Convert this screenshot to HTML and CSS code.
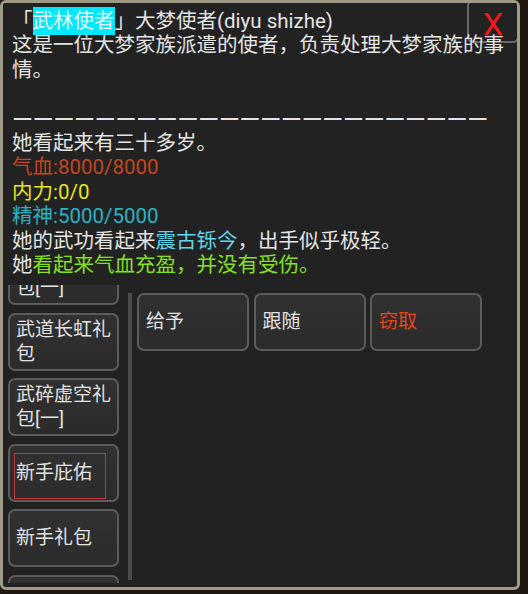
FILE: index.html
```html
<!DOCTYPE html>
<html lang="zh-CN">
<head>
<meta charset="utf-8">
<title>大梦使者</title>
<link rel="stylesheet" href="styles.css">
</head>
<body>
<div class="frame">
  <div class="base">
    <div class="list">
      <div class="list-inner">
        <div class="item">武动乾坤礼包[一]</div>
        <div class="item">武道长虹礼包</div>
        <div class="item">武碎虚空礼包[一]</div>
        <div class="item focus"><span class="ring"></span>新手庇佑</div>
        <div class="item">新手礼包</div>
        <div class="item">新手礼包</div>
      </div>
    </div>
    <div class="sep"></div>
    <div class="actions">
      <div class="act">给予</div>
      <div class="act">跟随</div>
      <div class="act steal">窃取</div>
    </div>
  </div>
  <div class="info">
    <div class="close">X</div>
    <div class="line">「<span class="hl">武林使者</span>」大梦使者(diyu shizhe)</div>
    <div class="line">这是一位大梦家族派遣的使者，负责处理大梦家族的事情。</div>
    <div class="blank"></div>
    <div class="line dash">———————————————————————</div>
    <div class="line">她看起来有三十多岁。</div>
    <div class="line hp">气血:8000/8000</div>
    <div class="line mp">内力:0/0</div>
    <div class="line sp">精神:5000/5000</div>
    <div class="line">她的武功看起来<span class="lvl">震古铄今</span>，出手似乎极轻。</div>
    <div class="line">她<span class="ok">看起来气血充盈，并没有受伤。</span></div>
  </div>
</div>
</body>
</html>
```
FILE: styles.css
```css
* { box-sizing: border-box; }
html, body {
  margin: 0;
  padding: 0;
  background: #1f1710;
  font-family: Roboto, "Noto Sans CJK SC", sans-serif;
  color: #e4e4e4;
}
.frame {
  position: relative;
  width: 520px;
  height: 590px;
  border: 3px solid #9d9a86;
  border-radius: 6px;
  background: #222222;
  overflow: hidden;
}
.base {
  display: flex;
  align-items: flex-start;
  height: 100%;
  padding: 290px 0 0 5px;
}
.list {
  width: 111px;
  height: 298px;
  margin-top: -8px;
  overflow: hidden;
}
.list-inner {
  display: flex;
  flex-direction: column;
  gap: 7.5px;
  margin-top: -38px;
}
.item, .act {
  position: relative;
  display: flex;
  align-items: center;
  height: 58px;
  border: 2px solid #5c5c5c;
  border-radius: 7px;
  background: linear-gradient(#313131, #2b2b2b);
  font-size: 19px;
  line-height: 24px;
  color: #e2e2e2;
  flex-shrink: 0;
}
.item {
  width: 111px;
  padding: 0 4px 0 6px;
}
.ring {
  position: absolute;
  left: 4px;
  top: 7px;
  width: 92px;
  height: 46px;
  border: 1px solid #c4343a;
}
.sep {
  width: 4px;
  height: 287px;
  margin-left: 9px;
  background: #4c4c4c;
}
.actions {
  display: flex;
  gap: 4.5px;
  margin-left: 5px;
}
.act {
  width: 112px;
  padding-left: 7px;
}
.steal { color: #e8441c; }
.info {
  position: absolute;
  top: 0;
  left: 0;
  right: 0;
  height: 282px;
  background: #222222;
  padding: 6px 5px 0 9px;
  font-size: 20.5px;
  line-height: 24.4px;
}
.line { position: relative; }
.blank { height: 24.4px; }
.hl {
  background: #00e8fc;
  color: #e6feff;
  padding: 2px 0;
}
.dash {
  font-family: Roboto, sans-serif;
  font-size: 26.5px;
  line-height: 24.4px;
  white-space: nowrap;
}
.hp { color: #c2461e; }
.mp { color: #e6e41e; }
.sp { color: #28b2c4; }
.lvl { color: #62d4ec; }
.ok { color: #86e020; }
.close {
  position: absolute;
  top: -3px;
  right: -2px;
  width: 52px;
  height: 43px;
  border: 2px solid #6a6a6a;
  border-radius: 6px;
  background: #222222;
  color: #f01818;
  font-family: Roboto, sans-serif;
  font-weight: 400;
  font-size: 32px;
  line-height: 45px;
  text-align: center;
}
```
